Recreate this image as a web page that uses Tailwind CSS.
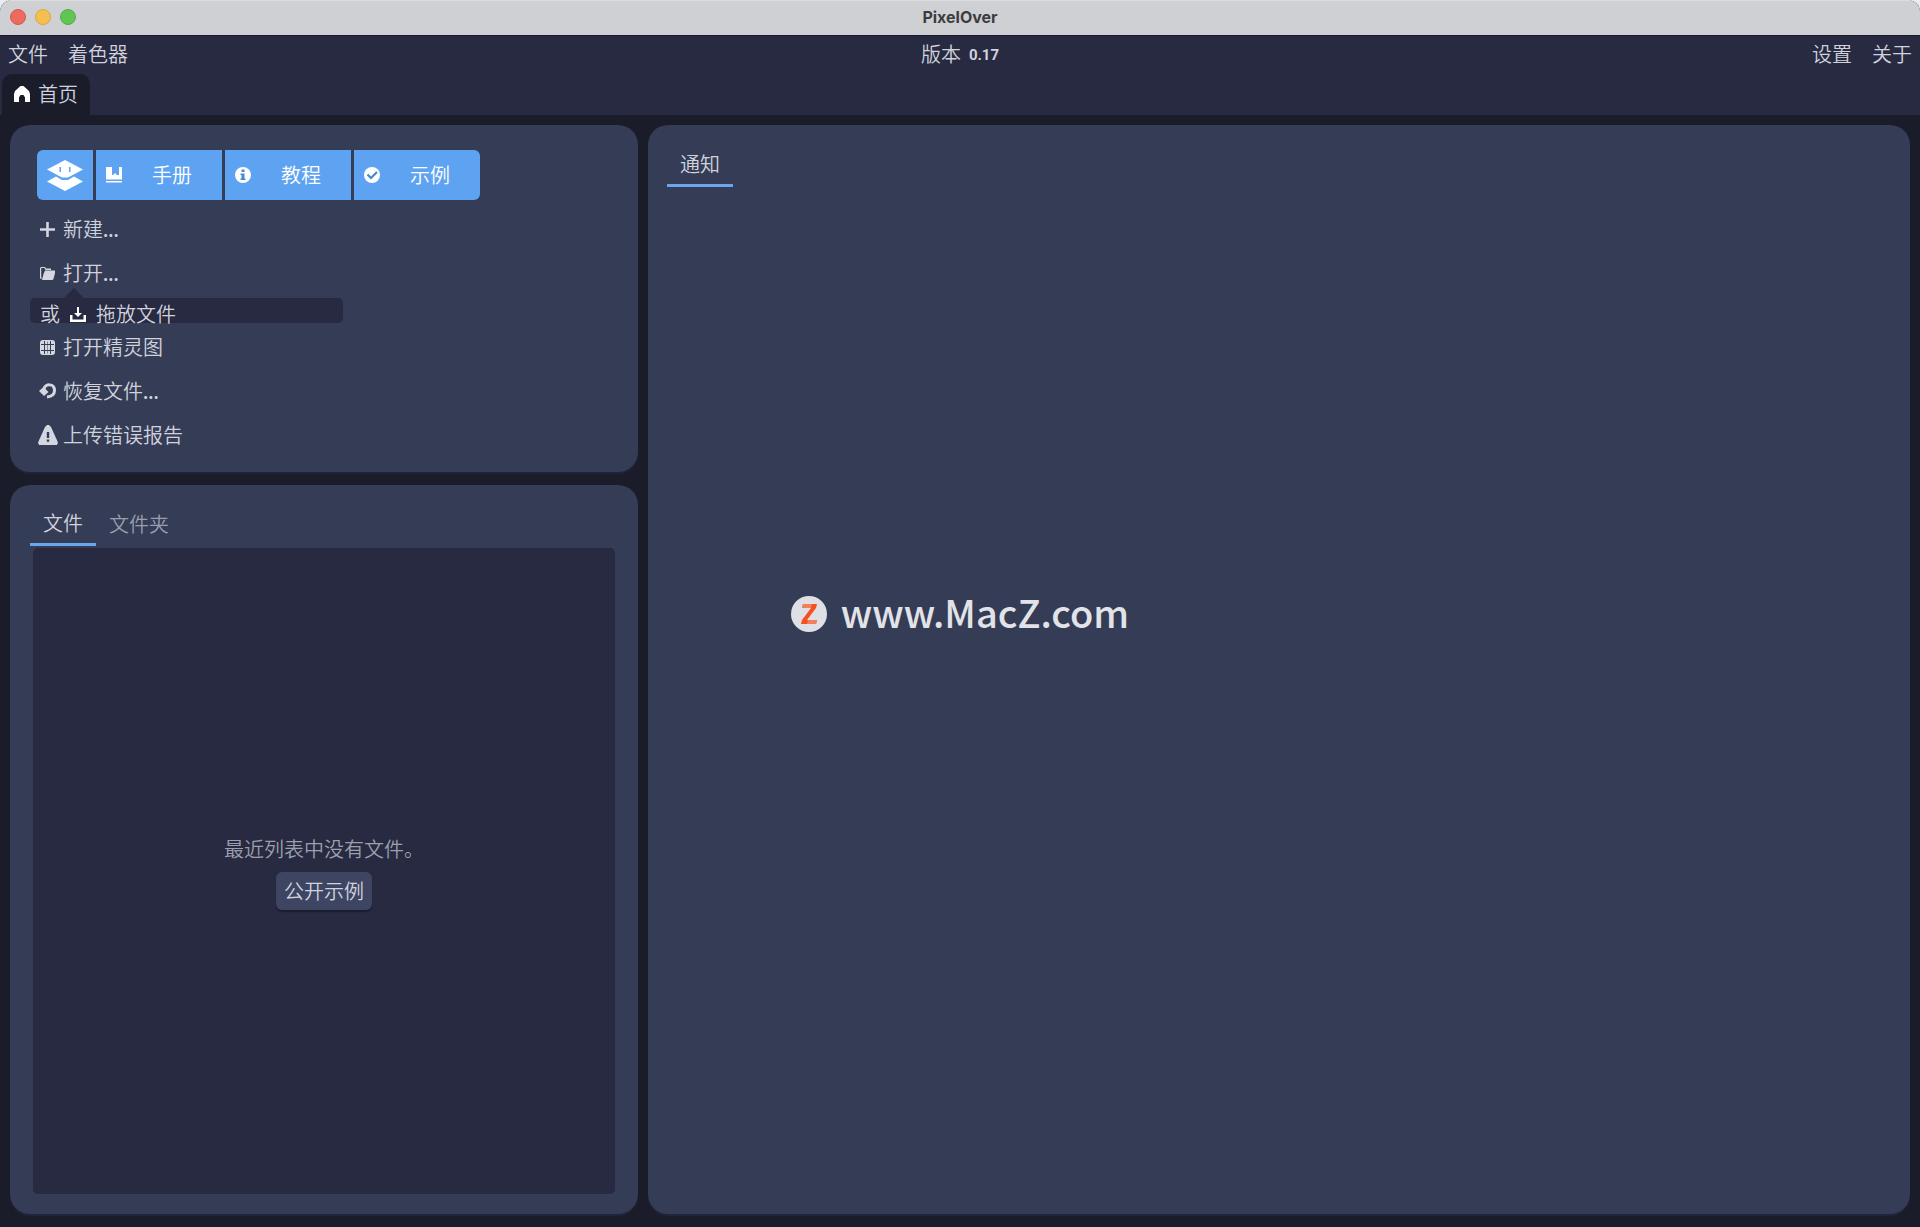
<!DOCTYPE html>
<html lang="zh-CN">
  <head>
    <meta charset="UTF-8" />
    <meta name="viewport" content="width=device-width, initial-scale=1.0" />
    <title>PixelOver</title>
    <script src="https://cdn.jsdelivr.net/npm/@tailwindcss/browser@4"></script>
  </head>
  <body class="bg-[#e9ebf1]">
    <div
      class="relative flex flex-col h-screen overflow-hidden rounded-t-xl bg-[#1b1c2a] font-['Noto_Sans_CJK_SC',sans-serif] font-[350] text-xl leading-6 text-[#d0d2de]"
    >
      <!-- window title bar -->
      <header class="relative flex items-center justify-center h-[35px] shrink-0 pb-0.5 bg-[#cfd0d3] border-t border-[#dcdde0]">
        <div class="absolute left-2.5 flex gap-[9px]">
          <span class="size-4 rounded-full bg-[#ec6a5e] border border-[#d5574c]"></span>
          <span class="size-4 rounded-full bg-[#f4bf4f] border border-[#dba63c]"></span>
          <span class="size-4 rounded-full bg-[#61c554] border border-[#4fae43]"></span>
        </div>
        <h1 class="font-['Inter',sans-serif] font-bold text-base text-[#3c3c3e]">PixelOver</h1>
      </header>

      <div class="flex flex-col h-20 shrink-0 bg-[#272a40] border-t border-[#191b2b]">
        <nav class="grid grid-cols-3 items-center h-[38px] px-2 pb-0.5">
          <div class="flex gap-5">
            <button>文件</button>
            <button>着色器</button>
          </div>
          <p class="flex items-center justify-center gap-2">
            版本 <span class="font-['Roboto',sans-serif] font-bold text-[15px] pt-0.5">0.17</span>
          </p>
          <div class="flex gap-5 justify-end">
            <button>设置</button>
            <button>关于</button>
          </div>
        </nav>
        <div class="flex grow">
          <button class="flex items-center gap-2 ml-0.5 pl-3 pr-3 pb-0.5 rounded-t-[10px] bg-[#1b1c2a]">
            <svg class="size-4" viewBox="0 0 16 16" fill="#fff">
              <path d="M6.500 0h3L15 5 16 8v8h-5v-4.500L9.500 9h-3L5 11.500V16H0V8l1-3z" />
            </svg>
            首页
          </button>
        </div>
      </div>

      <main class="grid grid-cols-[628px_1fr] gap-2.5 grow min-h-0 px-2.5 pt-2.5 pb-[13px]">
        <div class="flex flex-col gap-[13px] min-h-0">
          <section class="h-[347px] shrink-0 rounded-[20px] bg-[#353c55] shadow-[0_2px_0_#20233a] px-5 pt-[25px]">
            <div class="flex gap-[3px] h-[50px] ml-[7px] text-white">
              <button class="flex items-center justify-center w-14 rounded-l-md bg-[#5ea3f1]" aria-label="PixelOver">
                <svg class="w-9 h-[31px]" viewBox="0 0 36 31" fill="#fff">
                  <path d="M18 0 36 9.500 21 17.500h-6L0 9.500z" />
                  <path d="M9 16.500 15 20h6l6-3.500 9 5L18 31 0 21.500z" />
                  <path d="M12.500 7h1.500v5h-1.500zM22 7h1.500v5H22z" fill="#5ea3f1" />
                </svg>
              </button>
              <button class="flex items-center w-[126px] pl-2.5 bg-[#5ea3f1]">
                <svg class="size-4" viewBox="0 0 16 16" fill="#fff">
                  <path d="M0 0h6v8h1l2-2 2 2h2V0h3v12.500H0zM0 14h16v1.500H0z" />
                </svg>
                <span class="grow text-center">手册</span>
              </button>
              <button class="flex items-center w-[126px] pl-2.5 bg-[#5ea3f1]">
                <svg class="size-4" viewBox="0 0 16 16" fill="#fff">
                  <circle cx="8" cy="8" r="8" />
                  <path d="M6.500 2.500h3v2.500h-3zM5.500 6.500h4v5h1V13h-5v-1.500h1V8h-1z" fill="#4b87cb" />
                </svg>
                <span class="grow text-center">教程</span>
              </button>
              <button class="flex items-center w-[126px] pl-2.5 rounded-r-md bg-[#5ea3f1]">
                <svg class="size-4" viewBox="0 0 16 16" fill="none">
                  <circle cx="8" cy="8" r="8" fill="#fff" />
                  <path d="m3.500 7.500 3.500 3.500 6-6" stroke="#4b87cb" stroke-width="2.200" />
                </svg>
                <span class="grow text-center">示例</span>
              </button>
            </div>

            <div class="flex flex-col items-start pt-[7px]">
              <button class="flex items-center gap-2 h-11 pl-2.5">
                <svg class="size-[15px]" viewBox="0 0 15 15" fill="#d4d6e0">
                  <path d="M6.200 0h2.600v6.200H15v2.600H8.800V15H6.200V8.800H0V6.200h6.200z" />
                </svg>
                <span>新建<b class="text-base">...</b></span>
              </button>
              <button class="flex items-center gap-2 h-11 pl-2.5">
                <svg class="size-[15px]" viewBox="0 0 15 15" fill="#d4d6e0">
                  <path d="M1 1h4l1 1.500h5V4H5.500L4.500 2H1.200v9L2 13H1l-1-1V2z" />
                  <path d="M5 4.500h10V7l-1.500 6-1 1H2l1.500-6z" />
                </svg>
                <span>打开<b class="text-base">...</b></span>
              </button>
              <div class="relative mt-[3px] mb-0.5 w-[313px] h-[25px] rounded-[5px] bg-[#272a40]">
                <svg class="absolute left-[34px] -top-2.5 w-5 h-2.5" viewBox="0 0 20 10" fill="#272a40">
                  <path d="M0 10 10 0l10 10z" />
                </svg>
                <p class="flex items-center gap-2.5 h-8 pl-2.5">
                  或
                  <svg class="w-4 h-[15px]" viewBox="0 0 16 15" fill="#fff">
                    <path d="M7 0h2v6h3L8 10 4 6h3zM0 8h2.500v4.500h11V8H16v7H0z" />
                  </svg>
                  拖放文件
                </p>
              </div>
              <button class="flex items-center gap-2 h-11 pl-2.5">
                <svg class="size-[15px]" viewBox="0 0 15 15">
                  <rect width="15" height="15" rx="3" fill="#d4d6e0" />
                  <path d="M4.500 1v13M10.500 1v13M1 4.500h13M1 10.500h13" stroke="#353c55" stroke-width="1" />
                  <path d="M7.500 1.500v12" stroke="#353c55" stroke-width=".5" />
                </svg>
                <span>打开精灵图</span>
              </button>
              <button class="flex items-center gap-[7px] h-11 pl-[9px]">
                <svg class="w-[17px] h-4" viewBox="0 0 17 16" fill="none">
                  <path d="M5 6C6 .5 15.500 0 15.500 7.500c0 4.500-3 6-7.500 6.500" stroke="#d4d6e0" stroke-width="3" />
                  <path d="M0 8 4.500 4l5 5L5 13z" fill="#d4d6e0" />
                </svg>
                <span>恢复文件<b class="text-base">...</b></span>
              </button>
              <button class="flex items-center gap-[5px] h-11 pl-2">
                <svg class="size-5" viewBox="0 0 20 20">
                  <path d="M9 0h2l2 2 7 15.500-1 2.500H1l-1-2.500L7 2z" fill="#d4d6e0" />
                  <path d="M8.800 7h2.400v6H8.800zM8.800 14.500h2.400v2.200H8.800z" fill="#353c55" />
                </svg>
                <span>上传错误报告</span>
              </button>
            </div>
          </section>

          <section class="flex flex-col grow min-h-0 rounded-[20px] bg-[#353c55] shadow-[0_2px_0_#20233a] px-5 pt-4 pb-5">
            <div class="flex h-[45px]">
              <button class="px-[13px] pt-0.5 border-b-3 border-[#69a6ec]">文件</button>
              <button class="px-[13px] pt-1 border-b-3 border-transparent text-[#9a9eae]">文件夹</button>
            </div>
            <div class="flex flex-col items-center justify-center gap-[11px] grow mt-0.5 mx-[3px] pt-1 rounded-[5px] bg-[#272a40]">
              <p class="text-[#9c9fae]">最近列表中没有文件。</p>
              <button class="h-[38px] px-2 rounded-md bg-[#3d4562] shadow-[0_2px_1px_#1b1d2d]">公开示例</button>
            </div>
          </section>
        </div>

        <section class="rounded-[20px] bg-[#353c55] shadow-[0_2px_0_#20233a] px-[19px] pt-[17px]">
          <button class="h-[45px] px-[13px] pt-0.5 border-b-3 border-[#69a6ec]">通知</button>
        </section>
      </main>

      <div class="absolute inset-0 flex items-center justify-center gap-3.5 pointer-events-none text-[#e1e3e8]">
        <svg class="size-9" viewBox="0 0 36 36">
          <circle cx="18" cy="18" r="18" fill="#dfe0e5" />
          <path d="M12 8h14l-1 4-9 12h10l-1 4H10l1-4 9-12h-9z" fill="#f4511e" />
          <path d="M12 8h9l-1 4h-9zM17 24h9l-1 4h-9z" fill="#f0805c" />
        </svg>
        <span class="font-medium text-[38px] leading-10 pb-1">www.MacZ.com</span>
      </div>
    </div>
  </body>
</html>
